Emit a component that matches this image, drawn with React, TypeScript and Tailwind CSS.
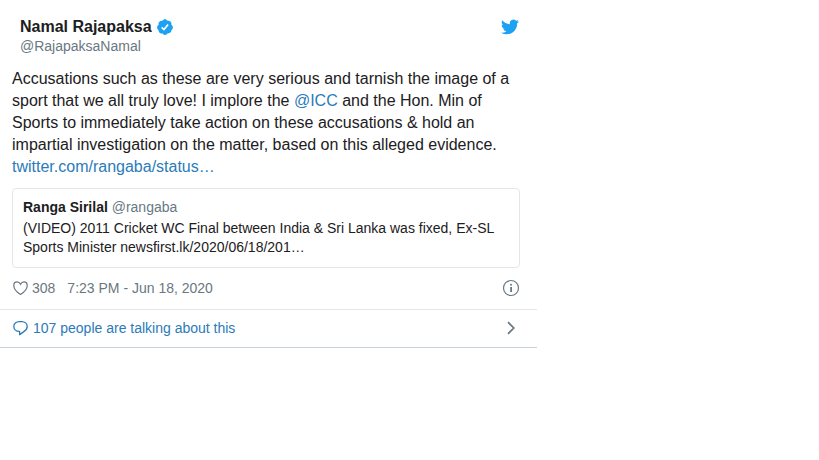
import type { ReactNode } from 'react';

function VerifiedBadge() {
  return (
    <svg viewBox="0 0 24 24" className="h-[18px] w-[18px] shrink-0" role="img" aria-label="Verified account">
      <path
        fill="#1da1f2"
        d="M22.5 12.5c0-1.58-.875-2.95-2.148-3.6.154-.435.238-.905.238-1.4 0-2.21-1.71-3.998-3.818-3.998-.47 0-.92.084-1.336.25C14.818 2.415 13.51 1.5 12 1.5s-2.816.917-3.437 2.25c-.415-.165-.866-.25-1.336-.25-2.11 0-3.818 1.79-3.818 4 0 .494.083.964.237 1.4-1.272.65-2.147 2.018-2.147 3.6 0 1.495.782 2.798 1.942 3.486-.02.17-.032.34-.032.514 0 2.21 1.708 4 3.818 4 .47 0 .92-.086 1.335-.25.62 1.334 1.926 2.25 3.437 2.25 1.512 0 2.818-.916 3.437-2.25.415.163.865.248 1.336.248 2.11 0 3.818-1.79 3.818-4 0-.174-.012-.344-.033-.513 1.158-.687 1.943-1.99 1.943-3.484z"
      />
      <path d="M7.6 12.4l3.1 3 5.4-6.6" fill="none" stroke="#fff" strokeWidth="2.2" />
    </svg>
  );
}

function BirdLogo() {
  return (
    <svg viewBox="0 0 24 24" className="h-[18px] w-[18px]" fill="#1da1f2" aria-hidden="true">
      <path d="M23.954 4.569a10 10 0 0 1-2.825.775 4.958 4.958 0 0 0 2.163-2.723c-.951.555-2.005.959-3.127 1.184a4.92 4.92 0 0 0-8.384 4.482C7.691 8.094 4.066 6.13 1.64 3.161a4.822 4.822 0 0 0-.666 2.475c0 1.71.87 3.213 2.188 4.096a4.904 4.904 0 0 1-2.228-.616v.061a4.923 4.923 0 0 0 3.946 4.827 4.996 4.996 0 0 1-2.212.085 4.937 4.937 0 0 0 4.604 3.417 9.868 9.868 0 0 1-6.102 2.105c-.39 0-.779-.023-1.17-.067a13.995 13.995 0 0 0 7.557 2.209c9.054 0 13.999-7.496 13.999-13.986 0-.209 0-.42-.015-.63a9.936 9.936 0 0 0 2.46-2.548z" />
    </svg>
  );
}

function HeartIcon() {
  return (
    <svg viewBox="0 0 16 16" className="h-4 w-4" fill="none" stroke="currentColor" strokeWidth="1.2" aria-hidden="true">
      <path d="M8.5 14.4C6.1 12.9 1.8 9.3 1.8 5.4 1.8 3.3 3.2 1.8 5 1.8c1.8 0 2.9 1.2 3.5 2.5.6-1.3 1.7-2.5 3.5-2.5s3.2 1.5 3.2 3.6c0 3.9-4.3 7.5-6.7 9z" />
    </svg>
  );
}

function ReplyIcon() {
  return (
    <svg viewBox="0 0 16 16" className="h-4 w-4" fill="none" stroke="currentColor" strokeWidth="1.3" strokeLinejoin="round" aria-hidden="true">
      <path d="M7.2 1.6h2.6c3 0 5.4 2.1 5.4 4.9 0 2.3-1.5 4-3.6 5.4l-4 2.7v-3.2h-.4c-3 0-5.4-2.1-5.4-4.9s2.4-4.9 5.4-4.9z" />
    </svg>
  );
}

function InfoIcon() {
  return (
    <svg viewBox="0 0 18 18" className="h-[18px] w-[18px]" fill="none" aria-hidden="true">
      <circle cx="9" cy="9" r="7.5" stroke="currentColor" strokeWidth="1.2" />
      <path d="M8.2 8H10v5H8.200z" fill="currentColor" />
      <circle cx="9" cy="5.7" r="1" fill="currentColor" />
    </svg>
  );
}

function ChevronIcon() {
  return (
    <svg viewBox="0 0 18 18" className="h-[18px] w-[18px]" fill="none" stroke="currentColor" strokeWidth="1.7" aria-hidden="true">
      <path d="M6 3.2L11.8 9 6 14.800" />
    </svg>
  );
}

function TextLink({ children }: { children: ReactNode }) {
  return (
    <a href="#" className="text-[#2b7bb9] hover:underline">
      {children}
    </a>
  );
}

function QuotedTweet() {
  return (
    <a
      href="#"
      className="mt-2.5 block rounded border border-[#e1e8ed] px-2.5 pt-[9px] pb-2.5 text-sm leading-[19px]"
    >
      <div className="mb-0.5">
        <span className="font-bold">Ranga Sirilal</span> <span className="text-[#697882]">@rangaba</span>
      </div>
      <p>
        (VIDEO) 2011 Cricket WC Final between India &amp; Sri Lanka was fixed, Ex-SL Sports Minister
        newsfirst.lk/2020/06/18/201…
      </p>
    </a>
  );
}

export default function App() {
  return (
    <article className="w-full max-w-[537px] border-b border-[#c8d3da] bg-white font-['Liberation_Sans',Arial,sans-serif] text-[#1c2022]">
      <header className="flex items-start justify-between pt-[18px] pr-[18px] pl-5">
        <a href="#" className="block">
          <div className="flex h-[18px] items-center gap-1 text-base leading-5 font-bold">
            Namal Rajapaksa
            <VerifiedBadge />
          </div>
          <div className="text-sm leading-5 text-[#697882]">@RajapaksaNamal</div>
        </a>
        <a href="#" aria-label="View on Twitter">
          <BirdLogo />
        </a>
      </header>

      <div className="mt-3 pr-[17px] pl-3">
        <p className="text-base leading-[22px]">
          Accusations such as these are very serious and tarnish the image of a sport that we all truly love! I
          implore the <TextLink>@ICC</TextLink> and the Hon. Min of Sports to immediately take action on these
          accusations &amp; hold an impartial investigation on the matter, based on this alleged evidence.{' '}
          <TextLink>twitter.com/rangaba/status…</TextLink>
        </p>
        <QuotedTweet />
        <div className="flex h-[41px] items-center pb-0.5 text-sm text-[#697882]">
          <button type="button" aria-label="Like, 308" className="flex items-center gap-1">
            <HeartIcon />
            308
          </button>
          <a href="#" className="ml-3">
            7:23 PM - Jun 18, 2020
          </a>
          <a href="#" aria-label="Twitter Ads info and privacy" className="ml-auto">
            <InfoIcon />
          </a>
        </div>
      </div>

      <a
        href="#"
        className="flex h-[38px] items-center gap-[5px] border-t border-[#e1e8ed] pr-[17px] pb-0.5 pl-3 text-sm text-[#2b7bb9]"
      >
        <ReplyIcon />
        107 people are talking about this
        <span className="ml-auto text-[#697882]">
          <ChevronIcon />
        </span>
      </a>
    </article>
  );
}
